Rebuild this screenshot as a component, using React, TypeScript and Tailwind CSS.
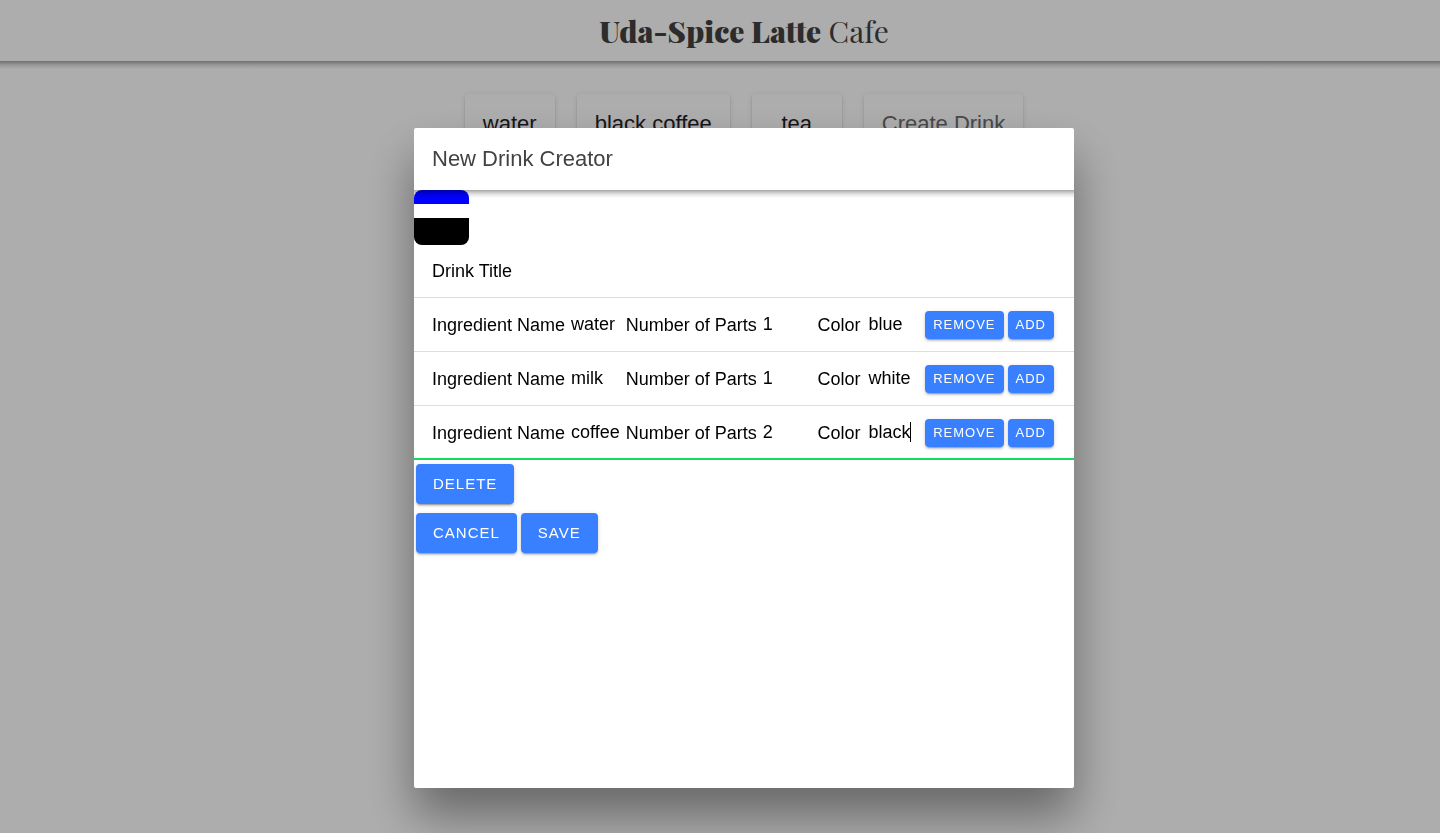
import React, { useState } from "react";

type Ingredient = { id: number; name: string; parts: string; color: string };

const initialIngredients: Ingredient[] = [
  { id: 1, name: "water", parts: "1", color: "blue" },
  { id: 2, name: "milk", parts: "1", color: "white" },
  { id: 3, name: "coffee", parts: "2", color: "black" },
];

const drinks = ["water", "black coffee", "tea"];

const buttonBase =
  "m-0.5 rounded bg-[#3880ff] uppercase tracking-[1px] text-white shadow-[0_3px_1px_-2px_rgba(0,0,0,0.2),0_2px_2px_0_rgba(0,0,0,0.14),0_1px_5px_0_rgba(0,0,0,0.12)]";

function SmallButton({ children, onClick }: { children: string; onClick: () => void }) {
  return (
    <button type="button" onClick={onClick} className={`${buttonBase} h-7 px-2 text-[13px] leading-7`}>
      {children}
    </button>
  );
}

function LargeButton({ children }: { children: string }) {
  return (
    <button type="button" className={`${buttonBase} h-10 px-[17px] text-[15px] leading-10`}>
      {children}
    </button>
  );
}

// Soft edge that hangs below a toolbar, over the content.
function ToolbarShadow() {
  return (
    <div className="pointer-events-none absolute inset-x-0 top-full h-2 bg-linear-to-b from-black/35 via-black/12 to-transparent" />
  );
}

function textWidth(text: string) {
  const context = document.createElement("canvas").getContext("2d");
  if (!context) return 0;
  context.font = "18px 'Liberation Sans', Arial, sans-serif";
  return Math.round(context.measureText(text).width);
}

type FieldProps = {
  id: string;
  label: string;
  value: string;
  labelWidth: string;
  startFocused?: boolean;
  onChange: (value: string) => void;
};

function Field({ id, label, value, labelWidth, startFocused = false, onChange }: FieldProps) {
  const [caret, setCaret] = useState<number | null>(startFocused ? value.length : null);
  return (
    <>
      <label htmlFor={id} className={`${labelWidth} shrink-0 whitespace-nowrap`}>
        {label}
      </label>
      <div className="relative flex w-[55px]">
        <input
          id={id}
          value={value}
          autoFocus={startFocused}
          onSelect={(e) => setCaret(e.currentTarget.selectionEnd)}
          onBlur={() => setCaret(null)}
          onChange={(e) => onChange(e.target.value)}
          className="w-full min-w-0 bg-transparent pb-0.5 caret-transparent outline-none"
        />
        {caret !== null && (
          <span
            aria-hidden="true"
            className="pointer-events-none absolute top-0.5 h-5 w-px bg-black"
            style={{ left: textWidth(value.slice(0, caret)) }}
          />
        )}
      </div>
    </>
  );
}

export default function App() {
  const [items, setItems] = useState(initialIngredients);
  const [title, setTitle] = useState("");

  const update = (id: number, patch: Partial<Ingredient>) =>
    setItems(items.map((item) => (item.id === id ? { ...item, ...patch } : item)));
  const remove = (id: number) => setItems(items.filter((item) => item.id !== id));
  const add = () => setItems([...items, { id: Date.now(), name: "", parts: "1", color: "" }]);

  return (
    <div className="min-h-screen bg-white font-['Liberation_Sans',Arial,sans-serif] text-black">
      <header className="relative flex h-[61px] items-center justify-center pl-12">
        <h1 className="font-['Playfair_Display','Liberation_Serif',serif] text-[30px] leading-10 text-[#424242]">
          <strong className="font-black">Uda-Spice Latte</strong> Cafe
        </h1>
        <ToolbarShadow />
      </header>
      <main className="flex justify-center gap-[22px] pt-[33px] pl-12 text-[22px] leading-6">
        {drinks.map((drink) => (
          <button
            key={drink}
            type="button"
            className="min-w-[90px] rounded p-[18px] text-[#222222] shadow-[0_3px_1px_-2px_rgba(0,0,0,0.2),0_2px_2px_0_rgba(0,0,0,0.14),0_1px_5px_0_rgba(0,0,0,0.12)]"
          >
            {drink}
          </button>
        ))}
        <button
          type="button"
          className="rounded p-[18px] text-[#6b6b6b] shadow-[0_2px_2px_0_rgba(0,0,0,0.1),0_1px_5px_0_rgba(0,0,0,0.12)]"
        >
          Create Drink
        </button>
      </main>

      <div className="fixed inset-0 flex items-start justify-center overflow-hidden bg-black/32 pt-32 pl-12">
        <section
          role="dialog"
          aria-labelledby="creator-title"
          className="min-h-[660px] w-full max-w-[660px] overflow-hidden rounded-xs bg-white text-[18px] leading-6 shadow-[0_28px_48px_rgba(0,0,0,0.4)]"
        >
          <div className="relative z-10 flex h-[62px] items-center px-[18px]">
            <h2 id="creator-title" className="text-[22px] text-[#424242]">
              New Drink Creator
            </h2>
            <ToolbarShadow />
          </div>

          <div className="flex h-[55px] w-[55px] flex-col overflow-hidden rounded-lg">
            {items.map((item) => (
              <div
                key={item.id}
                className="basis-0"
                style={{ flexGrow: Number(item.parts) || 0, backgroundColor: item.color }}
              />
            ))}
          </div>

          <div className="flex h-[53px] items-center border-b border-[#dedede] px-[18px]">
            <label htmlFor="drink-title" className="mr-2 shrink-0">
              Drink Title
            </label>
            <input
              id="drink-title"
              value={title}
              onChange={(e) => setTitle(e.target.value)}
              className="min-w-0 flex-1 bg-transparent outline-none"
            />
          </div>

          {items.map((item, index) => (
            <div
              key={item.id}
              className="flex h-[54px] items-center border-b border-[#dedede] px-[18px] focus-within:border-[#10dc60] focus-within:shadow-[inset_0_-1px_0_#10dc60]"
            >
              <Field
                id={`name-${item.id}`}
                label="Ingredient Name"
                labelWidth="w-[139px]"
                value={item.name}
                onChange={(name) => update(item.id, { name })}
              />
              <Field
                id={`parts-${item.id}`}
                label="Number of Parts"
                labelWidth="w-[137px]"
                value={item.parts}
                onChange={(parts) => update(item.id, { parts })}
              />
              <Field
                id={`color-${item.id}`}
                label="Color"
                labelWidth="w-[51px]"
                value={item.color}
                startFocused={index === initialIngredients.length - 1}
                onChange={(color) => update(item.id, { color })}
              />
              <div className="flex shrink-0">
                <SmallButton onClick={() => remove(item.id)}>Remove</SmallButton>
                <SmallButton onClick={add}>Add</SmallButton>
              </div>
            </div>
          ))}

          <div className="flex pt-0.5 pb-[5px]">
            <LargeButton>Delete</LargeButton>
          </div>
          <div className="flex">
            <LargeButton>Cancel</LargeButton>
            <LargeButton>Save</LargeButton>
          </div>
        </section>
      </div>
    </div>
  );
}
